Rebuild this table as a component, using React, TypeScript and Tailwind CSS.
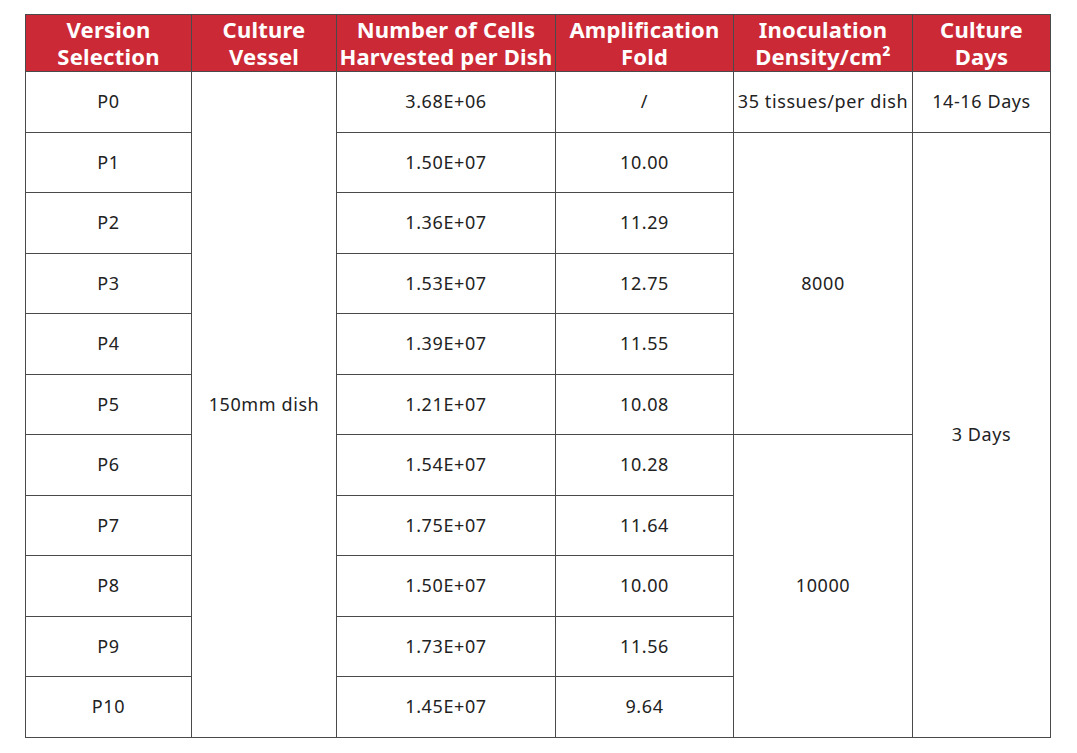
const rows = [
  { v: 'P0', cells: '3.68E+06', fold: '/' },
  { v: 'P1', cells: '1.50E+07', fold: '10.00' },
  { v: 'P2', cells: '1.36E+07', fold: '11.29' },
  { v: 'P3', cells: '1.53E+07', fold: '12.75' },
  { v: 'P4', cells: '1.39E+07', fold: '11.55' },
  { v: 'P5', cells: '1.21E+07', fold: '10.08' },
  { v: 'P6', cells: '1.54E+07', fold: '10.28' },
  { v: 'P7', cells: '1.75E+07', fold: '11.64' },
  { v: 'P8', cells: '1.50E+07', fold: '10.00' },
  { v: 'P9', cells: '1.73E+07', fold: '11.56' },
  { v: 'P10', cells: '1.45E+07', fold: '9.64' },
];

const td = 'border border-[#4a4a4a] text-center align-middle p-0';

export default function App() {
  return (
    <div className="min-h-[753px] w-[1077px] bg-white pt-[14px] pl-[25px] font-['Noto_Sans',sans-serif]">
      <table className="w-[1025px] table-fixed border-collapse text-[18px] tracking-[0.6px] text-[#222]">
        <colgroup>
          <col className="w-[166px]" />
          <col className="w-[145px]" />
          <col className="w-[219px]" />
          <col className="w-[178px]" />
          <col className="w-[179px]" />
          <col className="w-[138px]" />
        </colgroup>
        <thead>
          <tr className="h-[57px] bg-[#cc2936] text-[22px] font-semibold leading-[27px] tracking-[0.2px] text-white">
            <th className={td}>Version<br />Selection</th>
            <th className={td}>Culture<br />Vessel</th>
            <th className={`${td} whitespace-nowrap`}>Number of Cells<br />Harvested per Dish</th>
            <th className={td}>Amplification<br />Fold</th>
            <th className={td}>Inoculation<br />Density/cm²</th>
            <th className={td}>Culture<br />Days</th>
          </tr>
        </thead>
        <tbody>
          {rows.map((r, i) => (
            <tr key={r.v} className="h-[60.5px]">
              <td className={td}>{r.v}</td>
              {i === 0 && (
                <td className={td} rowSpan={11}>150mm dish</td>
              )}
              <td className={td}>{r.cells}</td>
              <td className={td}>{r.fold}</td>
              {i === 0 && (
                <>
                  <td className={`${td} whitespace-nowrap`}>35 tissues/per dish</td>
                  <td className={td}>14-16 Days</td>
                </>
              )}
              {i === 1 && (
                <>
                  <td className={td} rowSpan={5}>8000</td>
                  <td className={td} rowSpan={10}>3 Days</td>
                </>
              )}
              {i === 6 && (
                <td className={td} rowSpan={5}>10000</td>
              )}
            </tr>
          ))}
        </tbody>
      </table>
    </div>
  );
}
